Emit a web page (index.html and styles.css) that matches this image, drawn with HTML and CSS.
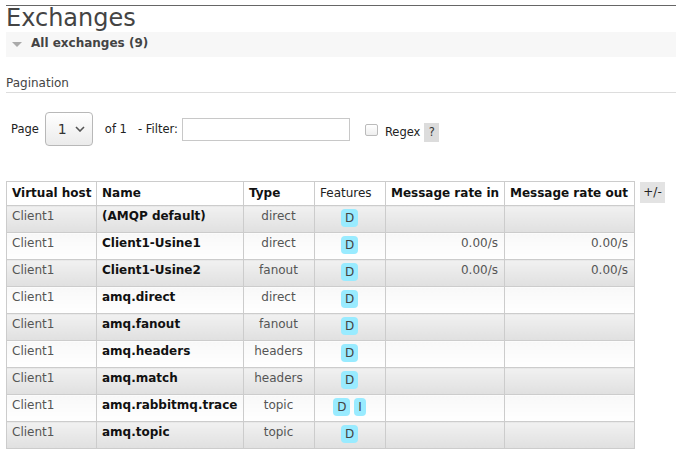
FILE: index.html
```html
<!DOCTYPE html>
<html>
<head>
<meta charset="utf-8">
<link rel="stylesheet" href="styles.css">
</head>
<body>
<div class="main">
  <h1>Exchanges</h1>
  <div class="section-bar"><span class="tri"></span><span>All exchanges (9)</span></div>
  <h3 class="pag-title">Pagination</h3>
  <div class="pager">
    <span class="lbl">Page</span>
    <div class="select"><span class="sel-val">1</span><svg class="chev" width="10" height="6" viewBox="0 0 10 6"><path d="M1 1 L5 5 L9 1" fill="none" stroke="#555" stroke-width="1.6"/></svg></div>
    <span class="lbl of">of 1</span>
    <span class="lbl filter-lbl">- Filter:</span>
    <input class="filter" type="text">
    <div class="regex-group">
      <span class="checkbox"></span>
      <span class="lbl regex">Regex</span>
      <span class="help">?</span>
    </div>
  </div>
  <div class="table-wrap">
    <table class="list">
      <colgroup>
        <col class="c-vhost"><col class="c-name"><col class="c-type"><col class="c-feat"><col class="c-in"><col class="c-out">
      </colgroup>
      <thead>
        <tr><th>Virtual host</th><th>Name</th><th>Type</th><th class="plain">Features</th><th>Message rate in</th><th>Message rate out</th></tr>
      </thead>
      <tbody>
        <tr class="alt1"><td>Client1</td><td class="name">(AMQP default)</td><td class="c">direct</td><td class="c"><span class="badge">D</span></td><td class="r"></td><td class="r"></td></tr>
        <tr class="alt2"><td>Client1</td><td class="name">Client1-Usine1</td><td class="c">direct</td><td class="c"><span class="badge">D</span></td><td class="r">0.00/s</td><td class="r">0.00/s</td></tr>
        <tr class="alt1"><td>Client1</td><td class="name">Client1-Usine2</td><td class="c">fanout</td><td class="c"><span class="badge">D</span></td><td class="r">0.00/s</td><td class="r">0.00/s</td></tr>
        <tr class="alt2"><td>Client1</td><td class="name">amq.direct</td><td class="c">direct</td><td class="c"><span class="badge">D</span></td><td class="r"></td><td class="r"></td></tr>
        <tr class="alt1"><td>Client1</td><td class="name">amq.fanout</td><td class="c">fanout</td><td class="c"><span class="badge">D</span></td><td class="r"></td><td class="r"></td></tr>
        <tr class="alt2"><td>Client1</td><td class="name">amq.headers</td><td class="c">headers</td><td class="c"><span class="badge">D</span></td><td class="r"></td><td class="r"></td></tr>
        <tr class="alt1"><td>Client1</td><td class="name">amq.match</td><td class="c">headers</td><td class="c"><span class="badge">D</span></td><td class="r"></td><td class="r"></td></tr>
        <tr class="alt2"><td>Client1</td><td class="name">amq.rabbitmq.trace</td><td class="c">topic</td><td class="c"><span class="badge">D</span> <span class="badge">I</span></td><td class="r"></td><td class="r"></td></tr>
        <tr class="alt1"><td>Client1</td><td class="name">amq.topic</td><td class="c">topic</td><td class="c"><span class="badge">D</span></td><td class="r"></td><td class="r"></td></tr>
      </tbody>
    </table>
    <span class="plusminus">+/-</span>
  </div>
</div>
</body>
</html>
```
FILE: styles.css
```css
* { box-sizing: border-box; }
html, body { margin: 0; padding: 0; background: #fff; }
body {
  font-family: "DejaVu Sans", Verdana, sans-serif;
  font-size: 12px;
  line-height: 14px;
  color: #484848;
}
.main {
  margin: 5px 0 0 6px;
  border-top: 1px solid #666;
}
h1 {
  margin: 0;
  font-size: 24px;
  line-height: 24px;
  font-weight: normal;
  color: #444;
}
.section-bar {
  margin-top: 2px;
  height: 25px;
  background: #f7f7f7;
  padding: 4px 0 0 6px;
  display: flex;
  align-items: flex-start;
  font-weight: bold;
  color: #444;
}
.tri {
  width: 0;
  height: 0;
  border-left: 5px solid transparent;
  border-right: 5px solid transparent;
  border-top: 5px solid #aaa;
  margin: 6px 9px 0 0;
}
.pag-title {
  margin: 19px 0 0;
  font-size: 12px;
  font-weight: normal;
  line-height: 14px;
  padding-bottom: 2px;
  border-bottom: 1px solid #ddd;
  color: #444;
}
.pager {
  margin-top: 19px;
  height: 34px;
  padding-left: 5px;
  display: flex;
  align-items: center;
  color: #222;
  font-size: 11.5px;
}
.select {
  margin-left: 6px;
  width: 48px;
  height: 34px;
  border: 1px solid #b8b8b8;
  border-radius: 4px;
  background: linear-gradient(#ffffff, #ebebeb);
  display: flex;
  align-items: center;
  padding-left: 12px;
}
.sel-val { font-size: 14px; color: #333; }
.chev { margin-left: 8px; }
.of { margin-left: 12px; }
.filter-lbl { margin-left: 11px; }
.filter {
  margin: 0 0 0 4px;
  width: 168px;
  height: 23px;
  border: 1px solid #c8c8c8;
  background: #fff;
  padding: 0;
}
.regex-group {
  display: flex;
  align-items: center;
  margin-top: 6px;
  margin-left: 15px;
}
.checkbox {
  width: 13px;
  height: 12px;
  border: 1px solid #bbb;
  border-radius: 2px;
  background: linear-gradient(#fff, #eee);
  margin-top: -5px;
}
.regex { margin-left: 7px; }
.help {
  margin-left: 4px;
  width: 15px;
  height: 19px;
  background: #dcdcdc;
  color: #333;
  text-align: center;
  line-height: 19px;
}
.table-wrap {
  margin-top: 35px;
  display: flex;
  align-items: flex-start;
  gap: 5px;
}
table.list {
  border-collapse: collapse;
  table-layout: fixed;
  width: 628px;
}
.c-vhost { width: 90px; }
.c-name { width: 147px; }
.c-type { width: 71px; }
.c-feat { width: 71px; }
.c-in { width: 119px; }
.c-out { width: 130px; }
table.list th, table.list td {
  border: 1px solid #ccc;
  vertical-align: top;
  white-space: nowrap;
}
table.list th {
  padding: 4px 5px 5px;
  text-align: left;
  font-weight: bold;
  color: #111;
  background: #fff;
}
table.list th.plain { font-weight: normal; color: #222; }
table.list td {
  padding: 3px 6px 5px 5px;
  color: #555;
}
table.list td.name { font-weight: bold; color: #111; }
table.list td.c { text-align: center; }
table.list td.r { text-align: right; }
tr.alt1 td { background: linear-gradient(#f1f1f1, #e0e0e0); }
tr.alt2 td { background: linear-gradient(#f8f8f8, #ffffff); }
.badge {
  display: inline-block;
  background: #99ebff;
  color: #444;
  border-radius: 4px;
  padding: 2px 4px;
  line-height: 14px;
  height: 18px;
}
.plusminus {
  margin-top: 1px;
  width: 25px;
  height: 21px;
  line-height: 21px;
  text-align: center;
  background: #e3e3e3;
  color: #222;
}
```
